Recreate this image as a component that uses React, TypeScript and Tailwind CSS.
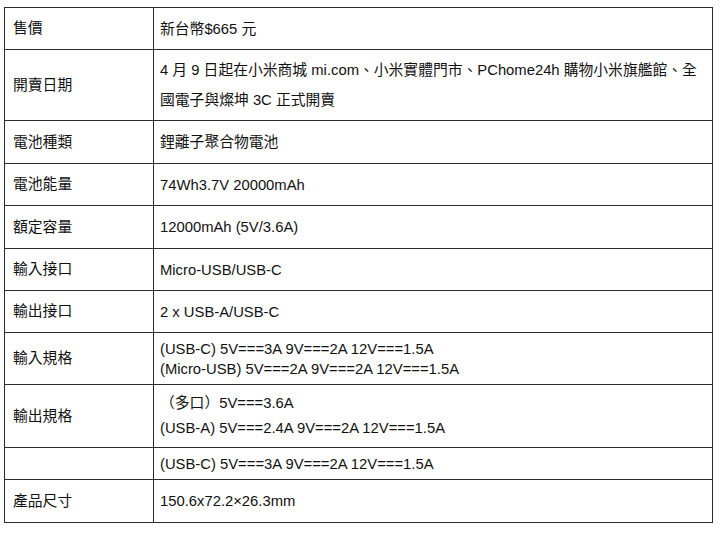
import React from "react";

type Row = { label: string; h: string; lines: string[]; lh?: string };

const rows: Row[] = [
  { label: "售價", h: "h-[42px]", lines: ["新台幣$665 元"] },
  {
    label: "開賣日期",
    h: "h-[71px]",
    lh: "leading-[30px]",
    lines: [
      "4 月 9 日起在小米商城 mi.com、小米實體門市、PChome24h 購物小米旗艦館、全",
      "國電子與燦坤 3C 正式開賣",
    ],
  },
  { label: "電池種類", h: "h-[43px]", lines: ["鋰離子聚合物電池"] },
  { label: "電池能量", h: "h-[42px]", lines: ["74Wh3.7V 20000mAh"] },
  { label: "額定容量", h: "h-[43px]", lines: ["12000mAh (5V/3.6A)"] },
  { label: "輸入接口", h: "h-[42px]", lines: ["Micro-USB/USB-C"] },
  { label: "輸出接口", h: "h-[42px]", lines: ["2 x USB-A/USB-C"] },
  {
    label: "輸入規格",
    h: "h-[52px]",
    lh: "leading-[20px]",
    lines: ["(USB-C) 5V===3A 9V===2A 12V===1.5A", "(Micro-USB) 5V===2A 9V===2A 12V===1.5A"],
  },
  {
    label: "輸出規格",
    h: "h-[63px]",
    lh: "leading-[25px]",
    lines: ["（多口）5V===3.6A", "(USB-A) 5V===2.4A 9V===2A 12V===1.5A"],
  },
  { label: "", h: "h-[32px]", lines: ["(USB-C) 5V===3A 9V===2A 12V===1.5A"] },
  { label: "產品尺寸", h: "h-[43px]", lines: ["150.6x72.2×26.3mm"] },
];

export default function App() {
  return (
    <div
      className="w-[720px] h-[535px] bg-white text-[#111] text-[14.8px] pt-[7px] pl-[4px]"
      style={{ fontFamily: '"Liberation Sans", Arial, "Noto Sans CJK TC", sans-serif' }}
    >
      <div className="w-[709px] border-l border-t border-[#2a2a2a] grid grid-cols-[149px_559px]">
        {rows.map((r, i) => (
          <React.Fragment key={i}>
            <div className={`${r.h} border-r border-b border-[#2a2a2a] flex items-center pl-[8px]`}>
              {r.label}
            </div>
            <div
              className={`${r.h} border-r border-b border-[#2a2a2a] flex flex-col justify-center pl-[6px] ${r.lh ?? "leading-[20px]"}`}
            >
              {r.lines.map((l, j) => (
                <div key={j} className="whitespace-nowrap">
                  {l}
                </div>
              ))}
            </div>
          </React.Fragment>
        ))}
      </div>
    </div>
  );
}
